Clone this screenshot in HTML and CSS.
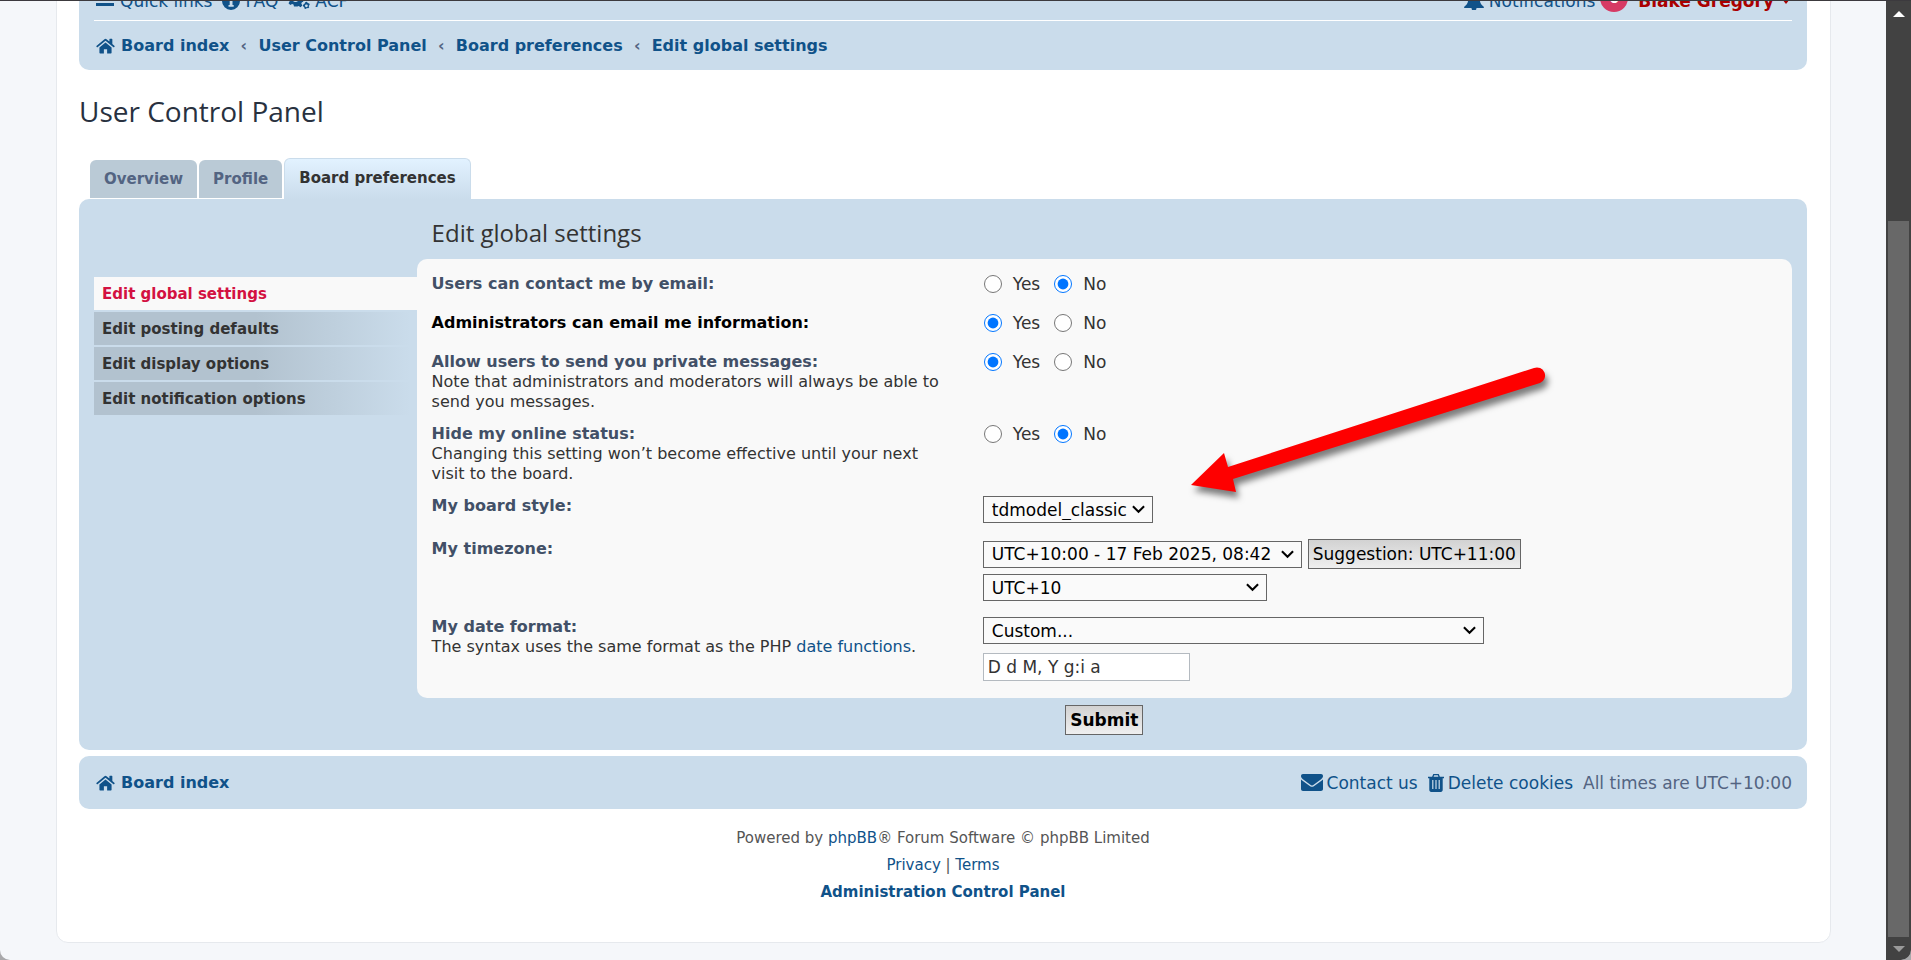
FILE: index.html
```html
<!DOCTYPE html>
<html lang="en">
<head>
<meta charset="utf-8">
<title>User Control Panel - Edit global settings</title>
<link rel="stylesheet" href="styles.css">
</head>
<body>
<svg class="sprite" aria-hidden="true">
  <symbol id="home" viewBox="0 0 20 16"><path d="M10 4.2 3.6 9.5v5.700c0 .4.300.8.800.8h3.900v-4.600h3.400V16h3.900c.5 0 .8-.4.8-.8V9.500zM19.600 7.900 17.200 5.900V.8c0-.3-.2-.5-.5-.5h-2.100c-.3 0-.5.2-.5.500v2.500L11.100.9a1.700 1.700 0 0 0-2.200 0L.4 7.900c-.2.200-.2.500 0 .7l.6.700c.2.200.4.200.6.100L10 2.500l8.400 6.900c.2.100.4.100.6-.1l.6-.7c.2-.2.200-.5 0-.7z"/></symbol>
  <symbol id="mail" viewBox="0 0 22 17"><path d="M0 2C0 .8.8 0 2 0h18c1.200 0 2 .8 2 2 0 1.300-.8 2.400-1.900 3.200L13 10.400c-.8.600-1.400 1-2 1s-1.200-.4-2-1L1.900 5.200C.8 4.400 0 3.300 0 2zM0 5.400c.4.400.8.700 1.200 1l6.900 5c1 .7 1.900 1.300 2.900 1.300s1.900-.6 2.900-1.300l6.900-5c.4-.3.800-.6 1.200-1V15c0 1.100-.9 2-2 2H2c-1.100 0-2-.9-2-2z"/></symbol>
  <symbol id="trash" viewBox="0 0 16 18"><path fill-rule="evenodd" d="M5.300 0h5.400l1.200 2.800H16v1.400h-1.300v11.600c0 1.300-.8 2.200-1.800 2.200H3.100c-1 0-1.800-.9-1.800-2.200V4.200H0V2.800h4.100zM6.200 1.300l-.6 1.500h4.800l-.6-1.500zM4.200 6v9h1.200V6zm3.200 0v9h1.200V6zm3.200 0v9h1.200V6z"/></symbol>
  <symbol id="cogs" viewBox="0 0 22 18"><path fill-rule="evenodd" d="M6 0h3l.5 2.100 1.400.6L12.700 1.600l1.800 1.900-1.100 1.800.5 1.300 1.300.5v2.600l-1.300.5-.6 1.400 1.100 1.800-1.900 1.800-1.800-1.100-1.300.5L9 14.500H6l-.5-2-1.400-.6-1.800 1.100L.5 11.200l1.100-1.800L1 8 0 7.700V5l1.100-.3.500-1.300L.5 1.600 2.400-.2l1.800 1.100 1.400-.6zM7.500 4.500a2.800 2.800 0 1 0 0 5.600 2.800 2.800 0 0 0 0-5.600zM17.500 10l1.500-.2.700 1.300 1.600.3.400 1.400-1 1.100.6 1.400-1.100 1-1.300-.4-1.100 1.100-1.400-.6-.2-1.400-1.300-.8.200-1.400 1.200-.7zM18.400 12.400a1.400 1.400 0 1 0 0 2.800 1.400 1.400 0 0 0 0-2.800z"/></symbol>
  <symbol id="info" viewBox="0 0 18 18"><path fill-rule="evenodd" d="M9 0a9 9 0 1 1 0 18A9 9 0 0 1 9 0zM7.600 2.500v2.200h2.900V2.500zM6.500 6.500v1.600h1.200v5H6.500v1.700h5.200v-1.700h-1.200V6.500z"/></symbol>
  <symbol id="bell" viewBox="0 0 20 18"><path d="M10 0c.7 0 1.200.5 1.200 1.200 3 .6 4.600 2.900 4.600 5.600 0 3.300.9 5.800 4.200 8.200 0 .6-.4 1-1 1h-6.500a2.500 2.500 0 0 1-5 0H1c-.6 0-1-.4-1-1 3.300-2.400 4.200-4.900 4.200-8.200 0-2.700 1.600-5 4.600-5.600C8.800.5 9.300 0 10 0z"/></symbol>
</svg>
<div class="viewport">
  <div class="scroller">
    <div class="wrap">
      <nav class="navbar navbar-top">
        <div class="nav-main">
          <div class="nav-links">
            <a href="#"><span class="bars"></span>Quick links</a>
            <a href="#"><svg class="ico ico-info"><use href="#info"/></svg>FAQ</a>
            <a href="#"><svg class="ico ico-cogs"><use href="#cogs"/></svg>ACP</a>
          </div>
          <div class="nav-user">
            <a href="#"><svg class="ico ico-bell"><use href="#bell"/></svg>Notifications</a>
            <strong class="badge">0</strong>
            <a class="username" href="#">Blake Gregory</a>
            <span class="caret"></span>
          </div>
        </div>
        <div class="crumbs">
          <a href="#"><svg class="ico ico-home"><use href="#home"/></svg>Board index</a><span>‹</span><a href="#">User Control Panel</a><span>‹</span><a href="#">Board preferences</a><span>‹</span><a href="#">Edit global settings</a>
        </div>
      </nav>

      <h1>User Control Panel</h1>

      <div class="tabs">
        <a href="#">Overview</a>
        <a href="#">Profile</a>
        <a class="active" href="#">Board preferences</a>
      </div>

      <main class="panel">
        <nav class="menu">
          <a class="active" href="#">Edit global settings</a>
          <a href="#">Edit posting defaults</a>
          <a href="#">Edit display options</a>
          <a href="#">Edit notification options</a>
        </nav>
        <form class="content">
          <h2>Edit global settings</h2>
          <div class="fields">
            <div class="row">
              <div class="term"><strong>Users can contact me by email:</strong></div>
              <div class="radios">
                <label><input type="radio" name="viewemail">Yes</label>
                <label><input type="radio" name="viewemail" checked>No</label>
              </div>
            </div>
            <div class="row">
              <div class="term"><strong class="hover">Administrators can email me information:</strong></div>
              <div class="radios">
                <label><input type="radio" name="massemail" checked>Yes</label>
                <label><input type="radio" name="massemail">No</label>
              </div>
            </div>
            <div class="row">
              <div class="term"><strong>Allow users to send you private messages:</strong><span>Note that administrators and moderators will always be able to send you messages.</span></div>
              <div class="radios">
                <label><input type="radio" name="allowpm" checked>Yes</label>
                <label><input type="radio" name="allowpm">No</label>
              </div>
            </div>
            <div class="row">
              <div class="term"><strong>Hide my online status:</strong><span>Changing this setting won’t become effective until your next visit to the board.</span></div>
              <div class="radios">
                <label><input type="radio" name="hideonline">Yes</label>
                <label><input type="radio" name="hideonline" checked>No</label>
              </div>
            </div>
            <div class="row row-select">
              <div class="term"><label for="style">My board style:</label></div>
              <div class="controls"><select id="style" class="w-style"><option>tdmodel_classic</option></select></div>
            </div>
            <div class="row row-select">
              <div class="term"><label for="tz">My timezone:</label></div>
              <div class="controls">
                <div class="line">
                  <select id="tz" class="w-date"><option>UTC+10:00 - 17 Feb 2025, 08:42</option></select>
                  <button type="button" class="btn">Suggestion: UTC+11:00</button>
                </div>
                <select class="w-zone" aria-label="Timezone"><option>UTC+10</option></select>
              </div>
            </div>
            <div class="row row-select">
              <div class="term"><label for="fmt">My date format:</label><span>The syntax uses the same format as the PHP <a href="#">date functions</a>.</span></div>
              <div class="controls spaced">
                <select id="fmt" class="w-format"><option>Custom...</option></select>
                <input type="text" class="text" aria-label="Custom date format" value="D d M, Y g:i a">
              </div>
            </div>
          </div>
          <div class="actions"><button type="button" class="btn submit">Submit</button></div>
        </form>
      </main>

      <nav class="navbar footbar">
        <a class="strong" href="#"><svg class="ico ico-home"><use href="#home"/></svg>Board index</a>
        <div class="foot-links">
          <a href="#"><svg class="ico ico-mail"><use href="#mail"/></svg>Contact us</a>
          <a href="#"><svg class="ico ico-trash"><use href="#trash"/></svg>Delete cookies</a>
          <span>All times are UTC+10:00</span>
        </div>
      </nav>

      <footer class="copyright">
        <p>Powered by <a href="#">phpBB</a>® Forum Software © phpBB Limited</p>
        <p><a href="#">Privacy</a> | <a href="#">Terms</a></p>
        <p><a class="strong" href="#">Administration Control Panel</a></p>
      </footer>
    </div>
  </div>
  <div class="scrollbar" aria-hidden="true">
    <svg class="arrow" viewBox="0 0 12 6"><path d="M6 0l6 6H0z"/></svg>
    <div class="thumb"></div>
    <svg class="arrow dim" viewBox="0 0 12 6"><path d="M0 0h12L6 6z"/></svg>
  </div>
  <svg class="pointer" viewBox="0 0 380 150" aria-hidden="true">
    <path d="M10 115 43 83 47 97 353 -2A8 8 0 0 1 359 13L52 109 55 122Z" transform="translate(0 11)"/>
  </svg>
</div>
</body>
</html>
```
FILE: styles.css
```css
* { box-sizing: border-box; }
body {
  margin: 0;
  background: #a9a9ab;
  color: #333;
  font: 16px/20px Verdana, "DejaVu Sans", sans-serif;
}
a { color: #105289; text-decoration: none; }
h1, h2, p { margin: 0; }
.sprite { position: absolute; width: 0; height: 0; }
.ico { fill: currentColor; flex: none; }
.ico-home { width: 19px; height: 16px; }
.ico-mail { width: 22px; height: 17px; }
.ico-trash { width: 16px; height: 18px; }
.ico-info { width: 18px; height: 18px; }
.ico-cogs { width: 22px; height: 18px; }
.ico-bell { width: 20px; height: 18px; }

.viewport {
  position: relative;
  display: flex;
  height: 100vh;
  overflow: hidden;
  background: #f5f7fa;
  border-top: 1px solid #3c3a3e;
  border-radius: 0 0 10px 10px;
}
.scroller {
  flex: 1;
  display: flex;
  flex-direction: column;
  justify-content: flex-end;
  padding: 0 55px 17px 56px;
}
.wrap {
  padding: 22px 23px 36px 22px;
  background: #fff;
  border: 1px solid #e6e9ed;
  border-radius: 12px;
}
.navbar {
  padding: 0 15px;
  background: #cadceb;
  border-radius: 10px;
}
.nav-main {
  display: flex;
  justify-content: space-between;
  height: 44px;
  padding: 14px 0 0 2px;
  border-bottom: 1px solid #fff;
  font-size: 17px;
}
.nav-links, .nav-user, .nav-main a, .foot-links, .foot-links a, .footbar, .strong, .crumbs, .crumbs a {
  display: flex;
  align-items: center;
}
.nav-main a { height: 20px; gap: 5px; }
.nav-links { height: 20px; gap: 10px; }
.nav-user { height: 20px; gap: 5px; }
.bars {
  width: 18px;
  height: 14px;
  margin: 0 1px 4px 0;
  border: solid;
  border-width: 3px 0;
  background: linear-gradient(currentColor, currentColor) center / 100% 2px no-repeat;
}
.badge {
  width: 28px;
  height: 28px;
  margin-bottom: 6px;
  border-radius: 14px;
  background: #d63a64;
  color: #fff;
  font-size: 14px;
  line-height: 28px;
  text-align: center;
}
.nav-main .username { margin-left: 5px; color: #a00; font-weight: bold; }
.caret {
  margin: 0 2px 0 3px;
  border: 4px solid transparent;
  border-top: 5px solid #a00;
  border-bottom: 0;
}
.crumbs { height: 49px; padding-left: 2px; font-weight: bold; }
.crumbs a, .strong { gap: 6px; font-weight: bold; }
.crumbs span { width: 29px; color: #536482; text-align: center; }

h1, h2 { font-family: "Trebuchet MS", "Open Sans", sans-serif; font-weight: normal; }
h1 { margin: 21px 0 27px; color: #28313f; font-size: 28px; line-height: 40px; }
h2 { padding: 18px 15px 10px; color: #333; font-size: 24px; line-height: 32px; }

.tabs { display: flex; align-items: flex-end; gap: 2px; height: 41px; padding-left: 11px; }
.tabs a {
  height: 38px;
  margin-bottom: 1px;
  padding: 0 14px;
  border-radius: 6px 6px 0 0;
  background: #bacad6;
  color: #536482;
  font-size: 15px;
  font-weight: bold;
  line-height: 38px;
}
.tabs .active {
  height: 41px;
  margin-bottom: 0;
  border: 1px solid #cadceb;
  border-bottom: 0;
  background: linear-gradient(#e2f2ff, #cadceb);
  color: #333;
}

.panel {
  display: flex;
  padding: 0 15px 15px;
  background: #cadceb;
  border-radius: 10px;
}
.menu {
  flex: 0 0 19%;
  display: flex;
  flex-direction: column;
  gap: 2px;
  padding-top: 78px;
}
.menu a {
  height: 33px;
  padding-left: 8px;
  background: linear-gradient(90deg, #b2c2cf 50%, #cadceb 98%);
  color: #333;
  font-size: 15px;
  font-weight: bold;
  line-height: 34px;
}
.menu .active { background: #f9f9f9; color: #d31141; }
.content { flex: 1; }
.fields {
  padding: 15px 15px 17px;
  background: #f9f9f9;
  border-radius: 10px;
}
.row { display: grid; grid-template-columns: 40% 1fr; column-gap: 13px; min-height: 27px; margin-bottom: 12px; }
.row:last-child { margin-bottom: 0; }
.term { padding-right: 20px; }
.term strong, .term label { display: block; color: #425067; font-weight: bold; }
.term .hover { color: #000; }
.radios { display: flex; gap: 14px; height: 20px; padding-left: 1px; font-size: 17px; }
.radios label { display: flex; align-items: center; gap: 11px; }
.radios input { width: 18px; height: 18px; margin: 0; accent-color: #0075ff; }
.controls { display: flex; flex-direction: column; align-items: flex-start; gap: 5px; font-size: 17px; }
.row-select { margin-bottom: 16px; }
.spaced { gap: 9px; }
.line { display: flex; align-items: center; gap: 6px; }
select {
  height: 27px;
  padding: 0 22px 0 8px;
  appearance: none;
  border: 1px solid #666;
  border-radius: 0;
  background: url("data:image/svg+xml,%3Csvg xmlns='http://www.w3.org/2000/svg' viewBox='0 0 14 9'%3E%3Cpath d='M1 1l6 6 6-6' fill='none' stroke='%23000' stroke-width='2.200'/%3E%3C/svg%3E") right 7px center / 13px 9px no-repeat #fafafa;
  color: #000;
  font: inherit;
}
.w-style { width: 170px; }
.w-date { width: 319px; }
.w-zone { width: 284px; }
.w-format { width: 501px; }
.text {
  width: 207px;
  height: 28px;
  padding: 2px 4px;
  border: 1px solid #b4bac0;
  background: #fff;
  color: #333;
  font: inherit;
}
.btn {
  height: 30px;
  padding: 0 4px;
  border: 1px solid #666;
  background: linear-gradient(#d2d2d2, #efefef);
  color: #000;
  font: inherit;
}
.actions { padding-top: 7px; font-size: 17px; text-align: center; }
.submit { font-weight: bold; }

.footbar { justify-content: space-between; height: 53px; margin-top: 6px; padding-left: 17px; }
.foot-links { gap: 10px; color: #536482; font-size: 17px; }
.foot-links a { gap: 4px; }
.copyright { padding-top: 16px; color: #555; font-size: 15px; line-height: 27px; text-align: center; }
.copyright .strong { display: inline; }

.scrollbar {
  display: flex;
  flex-direction: column;
  align-items: center;
  width: 25px;
  padding: 10px 2px 8px;
  background: #424242;
}
.arrow { width: 12px; height: 6px; fill: #fff; }
.dim { fill: #9a9a9a; }
.thumb { flex: 1; width: 21px; margin: 204px 0 9px; background: #686868; }
.pointer {
  position: absolute;
  left: 1181px;
  top: 358px;
  width: 380px;
  height: 150px;
  overflow: visible;
  fill: #fe0000;
  filter: drop-shadow(3px 6px 3px rgb(0 0 0 / 50%));
}
```
